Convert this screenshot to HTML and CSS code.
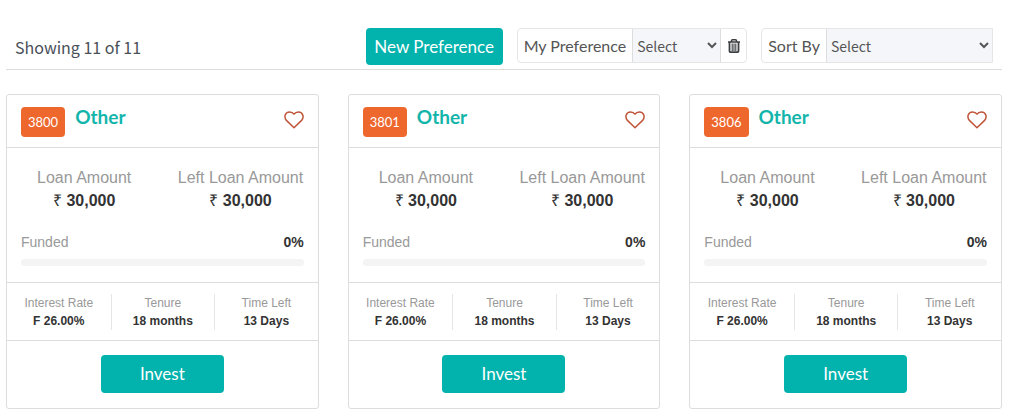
FILE: index.html
```
<!DOCTYPE html>
<html lang="en">
<head>
    <meta charset="UTF-8">
    <meta name="viewport" content="width=device-width, initial-scale=1.0">
    <title>Loans</title>
    <link rel="stylesheet" href="styles.css">
</head>
<body>
    <svg class="icon-defs" aria-hidden="true">
        <symbol id="icon-heart" viewBox="0 0 20 18">
            <path d="M10 16.800 2.400 9.400C-.4 6.200 1 1 5.600 1 7.800 1 9.200 2 10 3.200 10.800 2 12.200 1 14.400 1 19 1 20.400 6.200 17.600 9.400Z" fill="none" stroke="#c0553a" stroke-width="1.500" stroke-linejoin="round"/>
        </symbol>
    </svg>

    <!-- Toolbar -->
    <div class="toolbar">
        <div class="result-count">Showing 11 of 11</div>
        <div class="toolbar-controls">
            <button type="button" class="button new-preference">New Preference</button>
            <div class="input-group">
                <label class="input-label" for="preferenceSelect">My Preference</label>
                <select id="preferenceSelect" class="select preference-select">
                    <option>Select</option>
                </select>
                <button type="button" class="delete-button" aria-label="Delete preference">
                    <svg width="12" height="14" viewBox="0 0 12 14">
                        <path d="M0 3h12M3.500 3V1.700Q3.500.8 4.500.8h3q1 0 1 .9V3" fill="none" stroke="#3c4043" stroke-width="1.500"/>
                        <path d="M1.500 3v9q0 1.200 1.200 1.200h6.600q1.200 0 1.200-1.200V3" fill="none" stroke="#3c4043" stroke-width="1.800"/>
                        <path d="M4.200 4.500v7.500M6 4.500v7.500M7.800 4.500v7.500" fill="none" stroke="#3c4043" stroke-width="1.100"/>
                    </svg>
                </button>
            </div>
            <div class="input-group sort-group">
                <label class="input-label" for="sortSelect">Sort By</label>
                <select id="sortSelect" class="select sort-select">
                    <option>Select</option>
                </select>
            </div>
        </div>
    </div>

    <!-- Loan cards -->
    <div class="cards">
        <div class="card">
            <div class="card-header">
                <span class="loan-id">3800</span>
                <h2 class="loan-title">Other</h2>
                <button type="button" class="like-button" aria-label="Like loan 3800"><svg width="20" height="18"><use href="#icon-heart"/></svg></button>
            </div>
            <div class="card-body">
                <div class="amounts">
                    <div>
                        <div class="amount-label">Loan Amount</div>
                        <div class="amount"><span class="rupee">₹</span> 30,000</div>
                    </div>
                    <div>
                        <div class="amount-label">Left Loan Amount</div>
                        <div class="amount"><span class="rupee">₹</span> 30,000</div>
                    </div>
                </div>
                <div class="funded">
                    <span class="funded-label">Funded</span>
                    <span class="funded-value">0%</span>
                </div>
                <div class="progress"></div>
            </div>
            <div class="stats">
                <div class="stat"><div class="stat-label">Interest Rate</div><div class="stat-value">F 26.00%</div></div>
                <div class="stat"><div class="stat-label">Tenure</div><div class="stat-value">18 months</div></div>
                <div class="stat"><div class="stat-label">Time Left</div><div class="stat-value">13 Days</div></div>
            </div>
            <div class="card-footer">
                <button type="button" class="button invest">Invest</button>
            </div>
        </div>

        <div class="card">
            <div class="card-header">
                <span class="loan-id">3801</span>
                <h2 class="loan-title">Other</h2>
                <button type="button" class="like-button" aria-label="Like loan 3801"><svg width="20" height="18"><use href="#icon-heart"/></svg></button>
            </div>
            <div class="card-body">
                <div class="amounts">
                    <div>
                        <div class="amount-label">Loan Amount</div>
                        <div class="amount"><span class="rupee">₹</span> 30,000</div>
                    </div>
                    <div>
                        <div class="amount-label">Left Loan Amount</div>
                        <div class="amount"><span class="rupee">₹</span> 30,000</div>
                    </div>
                </div>
                <div class="funded">
                    <span class="funded-label">Funded</span>
                    <span class="funded-value">0%</span>
                </div>
                <div class="progress"></div>
            </div>
            <div class="stats">
                <div class="stat"><div class="stat-label">Interest Rate</div><div class="stat-value">F 26.00%</div></div>
                <div class="stat"><div class="stat-label">Tenure</div><div class="stat-value">18 months</div></div>
                <div class="stat"><div class="stat-label">Time Left</div><div class="stat-value">13 Days</div></div>
            </div>
            <div class="card-footer">
                <button type="button" class="button invest">Invest</button>
            </div>
        </div>

        <div class="card">
            <div class="card-header">
                <span class="loan-id">3806</span>
                <h2 class="loan-title">Other</h2>
                <button type="button" class="like-button" aria-label="Like loan 3806"><svg width="20" height="18"><use href="#icon-heart"/></svg></button>
            </div>
            <div class="card-body">
                <div class="amounts">
                    <div>
                        <div class="amount-label">Loan Amount</div>
                        <div class="amount"><span class="rupee">₹</span> 30,000</div>
                    </div>
                    <div>
                        <div class="amount-label">Left Loan Amount</div>
                        <div class="amount"><span class="rupee">₹</span> 30,000</div>
                    </div>
                </div>
                <div class="funded">
                    <span class="funded-label">Funded</span>
                    <span class="funded-value">0%</span>
                </div>
                <div class="progress"></div>
            </div>
            <div class="stats">
                <div class="stat"><div class="stat-label">Interest Rate</div><div class="stat-value">F 26.00%</div></div>
                <div class="stat"><div class="stat-label">Tenure</div><div class="stat-value">18 months</div></div>
                <div class="stat"><div class="stat-label">Time Left</div><div class="stat-value">13 Days</div></div>
            </div>
            <div class="card-footer">
                <button type="button" class="button invest">Invest</button>
            </div>
        </div>
    </div>
</body>
</html>
```
FILE: styles.css
```
* {
    box-sizing: border-box;
}

body {
    margin: 0;
    padding: 28px 22px 9px 6px;
    background-color: #fff;
    color: #333;
    font-family: "Liberation Sans", Arial, sans-serif;
}

.icon-defs {
    display: none;
}

.toolbar {
    display: flex;
    align-items: center;
    justify-content: space-between;
    padding: 0 9px 4px;
    margin-bottom: 24px;
    border-bottom: 1px solid #ddd;
    font-family: "Noto Sans CJK SC", sans-serif;
}

.result-count {
    font-size: 16px;
    line-height: 24px;
    color: #495057;
}

.toolbar-controls {
    display: flex;
    align-items: flex-start;
    gap: 14px;
}

.button {
    border: 0;
    border-radius: 4px;
    background-color: #02b3ad;
    color: #fff;
    font-family: Lato, sans-serif;
    font-size: 17px;
    line-height: 24px;
    cursor: pointer;
}

.new-preference {
    width: 137px;
    height: 37px;
    padding: 0;
}

.input-group {
    display: flex;
    height: 35px;
    border: 1px solid #e6e6e6;
    border-radius: 4px;
}

.sort-group {
    border-radius: 4px 0 0 4px;
}

.input-label {
    padding: 0 6px;
    font-family: Lato, sans-serif;
    font-size: 16px;
    line-height: 34px;
    color: #555;
    white-space: nowrap;
}

.select {
    border: 0;
    border-left: 1px solid #ddd;
    border-radius: 0;
    background-color: #f4f6f9;
    color: #555;
    font-family: "Noto Sans CJK SC", sans-serif;
    font-size: 14px;
}

.preference-select {
    width: 88px;
}

.sort-select {
    width: 166px;
}

.delete-button {
    display: flex;
    align-items: center;
    justify-content: center;
    width: 26px;
    padding: 0;
    border: 0;
    border-left: 1px solid #ddd;
    background: none;
    cursor: pointer;
}

.cards {
    display: grid;
    grid-template-columns: repeat(3, 1fr);
    gap: 29px;
}

.card {
    border: 1px solid #ddd;
    border-radius: 3px;
}

.card-header {
    display: flex;
    align-items: flex-start;
    height: 53px;
    padding: 12px 14px;
    border-bottom: 1px solid #ddd;
}

.loan-id {
    padding: 0 7px;
    border-radius: 4px;
    background-color: #ee672d;
    color: #fff;
    font-family: Lato, sans-serif;
    font-size: 13px;
    line-height: 30px;
}

.loan-title {
    margin: 0 auto 0 10px;
    color: #13b5ab;
    font-family: Lato, sans-serif;
    font-size: 19px;
    line-height: 20px;
}

.like-button {
    display: flex;
    padding: 4px 0 0;
    border: 0;
    background: none;
    cursor: pointer;
}

.card-body {
    padding: 18px 14px 16px;
}

.amounts {
    display: grid;
    grid-template-columns: 1fr 1fr;
    gap: 30px;
    text-align: center;
}

.amount-label {
    font-size: 16px;
    line-height: 24px;
    color: #999;
    white-space: nowrap;
}

.amount {
    font-size: 16px;
    font-weight: bold;
    line-height: 22px;
}

.rupee {
    font-weight: normal;
}

.funded {
    display: flex;
    justify-content: space-between;
    margin-top: 19px;
    font-size: 14px;
    line-height: 22px;
}

.funded-label {
    color: #999;
}

.funded-value {
    font-weight: bold;
}

.progress {
    height: 7px;
    margin-top: 6px;
    border-radius: 4px;
    background-color: #f4f4f4;
}

.stats {
    display: grid;
    grid-template-columns: repeat(3, 1fr);
    padding: 11px 0 10px;
    border-top: 1px solid #ddd;
    border-bottom: 1px solid #ddd;
    text-align: center;
    font-size: 12px;
    line-height: 18px;
}

.stat + .stat {
    border-left: 1px solid #e6e6e6;
}

.stat-label {
    color: #999;
}

.stat-value {
    font-weight: bold;
}

.card-footer {
    padding: 14px 14px 15px;
    text-align: center;
}

.invest {
    display: block;
    width: 123px;
    height: 38px;
    margin: 0 auto;
}
```
